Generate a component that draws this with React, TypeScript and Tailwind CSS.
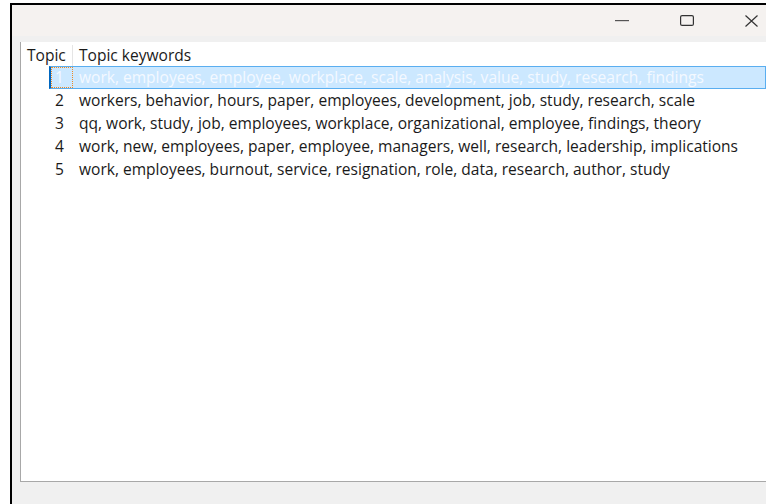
import React from "react";

type Topic = { id: number; keywords: string };

const topics: Topic[] = [
  { id: 1, keywords: "work, employees, employee, workplace, scale, analysis, value, study, research, findings" },
  { id: 2, keywords: "workers, behavior, hours, paper, employees, development, job, study, research, scale" },
  { id: 3, keywords: "qq, work, study, job, employees, workplace, organizational, employee, findings, theory" },
  { id: 4, keywords: "work, new, employees, paper, employee, managers, well, research, leadership, implications" },
  { id: 5, keywords: "work, employees, burnout, service, resignation, role, data, research, author, study" },
];

function CaptionButtons() {
  return (
    <div className="flex h-full">
      <button className="w-[65px] h-full flex items-center justify-center">
        <svg width="14" height="2" viewBox="0 0 14 2">
          <rect x="0" y="0" width="14" height="1.2" fill="#555" />
        </svg>
      </button>
      <button className="w-[65px] h-full flex items-center justify-center">
        <svg width="14" height="11" viewBox="0 0 14 11">
          <rect x="0.6" y="0.6" width="12.8" height="9.8" rx="1.5" fill="none" stroke="#333" strokeWidth="1.2" />
        </svg>
      </button>
      <button className="w-[65px] h-full flex items-center justify-center">
        <svg width="13" height="12" viewBox="0 0 13 12">
          <path d="M0.5 0.5 L12.5 11.5 M12.5 0.5 L0.5 11.5" stroke="#333" strokeWidth="1.2" fill="none" />
        </svg>
      </button>
    </div>
  );
}

function TopicRow({ topic, selected }: { topic: Topic; selected: boolean }) {
  return (
    <div className="flex h-[23px] items-stretch">
      <div className="w-[28px] shrink-0" />
      <div
        className={
          selected
            ? "flex flex-1 items-stretch bg-[#cce8ff] border-y border-r border-[#5aaef0] border-l-2 border-l-[#0067c0]"
            : "flex flex-1 items-stretch border-y border-r border-transparent border-l-2"
        }
      >
        <div
          className={
            selected
              ? "w-[22px] shrink-0 flex items-center justify-end pr-[8px] border border-dotted border-[#f08a24] text-[#f4f9ff]"
              : "w-[22px] shrink-0 flex items-center justify-end pr-[9px] text-[#1a1a1a]"
          }
        >
          {topic.id}
        </div>
        <div
          className={
            selected
              ? "flex items-center pl-[6px] whitespace-nowrap text-[#f4f9ff]"
              : "flex items-center pl-[6px] whitespace-nowrap text-[#1a1a1a]"
          }
        >
          {topic.keywords}
        </div>
      </div>
    </div>
  );
}

export default function App() {
  const selectedId = 1;

  return (
    <div
      className="w-[766px] h-[504px] bg-white flex overflow-hidden text-[15.55px]"
      style={{ fontFamily: '"Segoe UI", "Open Sans", sans-serif' }}
    >
      <div className="w-[10px] shrink-0" />
      <div className="w-[774px] shrink-0 mt-[3px] border-l-2 border-t-2 border-black flex flex-col">
        <div className="h-[31px] bg-[#f5f2f0] flex justify-end">
          <CaptionButtons />
        </div>

        <div className="flex-1 bg-[#f0f0f0] pl-[8px] pt-[6px] pb-[22px]">
          <div className="w-[746px] h-full bg-white border-l border-b border-[#a8a8a8] flex flex-col">
            <div className="flex h-[24px] items-center text-[#1a1a1a] pt-[3px]">
              <div className="w-[52px] h-full flex items-center pl-[6px] border-r border-[#e5e5e5]">Topic</div>
              <div className="pl-[6px]">Topic keywords</div>
            </div>
            {topics.map((t) => (
              <TopicRow key={t.id} topic={t} selected={t.id === selectedId} />
            ))}
          </div>
        </div>
      </div>
    </div>
  );
}
